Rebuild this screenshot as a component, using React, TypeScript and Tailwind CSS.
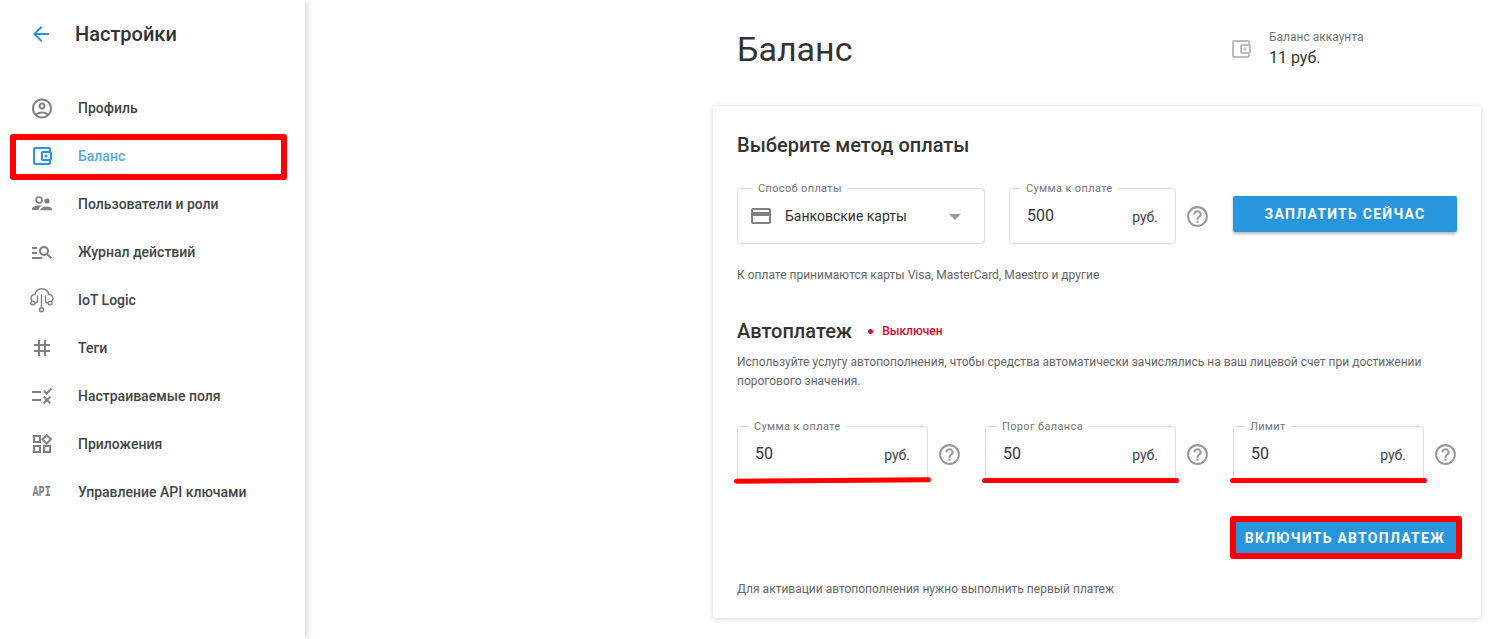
import React from "react";
import {
  MdArrowBack,
  MdOutlineAccountCircle,
  MdOutlineAccountBalanceWallet,
  MdManageSearch,
  MdTag,
  MdRule,
  MdOutlineWidgets,
  MdHelpOutline,
  MdOutlineCreditCard,
} from "react-icons/md";

const UsersIcon = () => (
  <svg width="24" height="24" viewBox="0 0 24 24" fill="#808080">
    <circle cx="9" cy="8" r="3" fill="none" stroke="#808080" strokeWidth="1.7" />
    <circle cx="17" cy="9" r="2.6" />
    <path d="M2 18v-1.2C2 14.8 6 13.4 9 13.4c1 0 2 .15 3 .45-1.6.8-3 1.9-3.6 4.15H2z" />
    <path d="M10 18.2c.6-2.4 4.2-3.8 7-3.8 2.400 0 5 1 5 2.700v1.100H10z" />
  </svg>
);

const CloudIcon = () => (
  <svg width="26" height="26" viewBox="0 0 26 26" fill="none" stroke="#808080" strokeWidth="1.4" strokeLinecap="round" className="shrink-0">
    <path d="M2.800 13.500C1.300 11.500 1.800 7.800 5.800 7.500 7 3.500 10 1.700 13 1.700c3.500 0 6 2.300 7 5.800 3.800.3 4.800 3.800 3.200 6" />
    <path d="M12.500 8v12.500M8.500 9v4.500c0 1.500-1 2.500-2.700 2.500M16.500 9v4.500c0 1.500 1 2.500 2.700 2.500" />
    <circle cx="12.500" cy="22.800" r="2" />
    <circle cx="3.800" cy="16" r="1.900" />
    <circle cx="21.200" cy="16" r="1.900" />
  </svg>
);

const navItems: { label: string; icon: React.ReactNode; active?: boolean }[] = [
  { label: "Профиль", icon: <MdOutlineAccountCircle size={25} color="#808080" /> },
  { label: "Баланс", icon: <MdOutlineAccountBalanceWallet size={24} color="#2a94d6" />, active: true },
  { label: "Пользователи и роли", icon: <UsersIcon /> },
  { label: "Журнал действий", icon: <MdManageSearch size={24} color="#808080" /> },
  { label: "IoT Logic", icon: <CloudIcon /> },
  { label: "Теги", icon: <MdTag size={24} color="#808080" /> },
  { label: "Настраиваемые поля", icon: <MdRule size={24} color="#808080" /> },
  { label: "Приложения", icon: <MdOutlineWidgets size={24} color="#808080" /> },
  {
    label: "Управление API ключами",
    icon: <span className="font-['Liberation_Mono',monospace] text-[14px] font-bold text-[#808080] scale-x-[0.72]">API</span>,
  },
];

function Field({ label, value, wide }: { label: string; value: string; wide?: boolean }) {
  return (
    <div className={`relative h-[56px] rounded-[4px] border border-[#dedede] flex items-center pl-[17px] pr-[17px] ${wide ? "w-[167px]" : "w-[191px]"}`}>
      <span className="absolute left-[11px] -top-[7px] bg-white px-[5px] text-[11px] leading-[13px] tracking-[0.35px] text-[#757575]">{label}</span>
      <span className="flex-1 text-[16px] text-[#333]">{value}</span>
      <span className="text-[14px] text-[#444] pt-[2px]">руб.</span>
    </div>
  );
}

const Help = () => (
  <div className="w-[24px] h-[24px] shrink-0 flex items-center justify-center">
    <MdHelpOutline size={25} color="#999" className="shrink-0" />
  </div>
);

function Underline({ slanted }: { slanted?: boolean }) {
  return (
    <div className={`absolute -left-[3px] -right-[3px] -bottom-[1px] h-[5px] rounded-full bg-[#ff0000] ${slanted ? "-rotate-[0.5deg]" : ""}`} />
  );
}

export default function App() {
  return (
    <div className="flex h-[639px] w-[1499px] overflow-hidden bg-white font-['Roboto',sans-serif]">
      <aside className="w-[305px] shrink-0 h-full bg-white shadow-[2px_0_7px_rgba(0,0,0,0.16)] z-10">
        <div className="h-[84px] pb-[16px] flex items-center pl-[29px]">
          <MdArrowBack size={24} color="#2a94d6" />
          <span className="ml-[22px] text-[20px] font-medium text-[#333]">Настройки</span>
        </div>
        <nav>
          {navItems.map((item) => (
            <div key={item.label} className="relative h-[48px] flex items-center">
              <div className="w-[78px] pl-[30px] shrink-0">
                <div className="w-[24px] h-[24px] flex items-center justify-center">{item.icon}</div>
              </div>
              <span className={`text-[14px] font-medium ${item.active ? "text-[#5ba8da]" : "text-[#444]"}`}>{item.label}</span>
              {item.active && (
                <div className="absolute left-[10px] top-[2px] w-[277px] h-[46px] border-[6px] border-[#ff0000] rounded-[3px]" />
              )}
            </div>
          ))}
        </nav>
      </aside>

      <main className="flex-1 pl-[408px]">
        <div className="w-[768px]">
          <header className="h-[106px] px-[24px] flex justify-between items-start">
            <h1 className="mt-[26px] text-[34px] leading-[46px] text-[#333]">Баланс</h1>
            <div className="w-[226px] mt-[28px] flex">
              <MdOutlineAccountBalanceWallet size={24} color="#bdbdbd" className="-ml-[2px] mt-[9px]" />
              <div className="ml-[16px]">
                <div className="text-[12px] leading-[18px] text-[#757575]">Баланс аккаунта</div>
                <div className="text-[16px] leading-[24px] text-[#333]">11 руб.</div>
              </div>
            </div>
          </header>

          <section className="bg-white rounded-[4px] shadow-[0_1px_6px_rgba(0,0,0,0.16)] px-[24px] pt-[24px] pb-[19px]">
            <h2 className="h-[30px] flex items-center text-[20px] font-medium text-[#333]">Выберите метод оплаты</h2>

            <div className="mt-[28px] flex items-center">
              <div className="relative h-[56px] w-[248px] rounded-[4px] border border-[#dedede] flex items-center pl-[11px]">
                <span className="absolute left-[15px] -top-[7px] bg-white px-[5px] text-[11px] leading-[13px] tracking-[0.35px] text-[#757575]">Способ оплаты</span>
                <MdOutlineCreditCard size={24} color="#808080" />
                <span className="ml-[12px] flex-1 text-[14px] text-[#333]">Банковские карты</span>
                <span className="mr-[23px] mt-[2px] w-0 h-0 border-x-[6px] border-x-transparent border-t-[6px] border-t-[#9a9a9a]" />
              </div>
              <div className="ml-[24px]"><Field label="Сумма к оплате" value="500" wide /></div>
              <div className="ml-[9px] h-[24px]"><Help /></div>
              <button className="ml-[24px] h-[36px] w-[224px] rounded-[2px] bg-[#2896dc] text-white text-[14px] font-bold tracking-[1.25px] shadow-[0_2px_3px_rgba(0,0,0,0.28)] -mt-[4px]">
                ЗАПЛАТИТЬ СЕЙЧАС
              </button>
            </div>

            <p className="mt-[21px] h-[20px] flex items-center text-[12px] text-[#666]">К оплате принимаются карты Visa, MasterCard, Maestro и другие</p>

            <div className="mt-[31px] h-[30px] flex items-center">
              <h2 className="text-[20px] font-medium text-[#333]">Автоплатеж</h2>
              <span className="ml-[16px] w-[5px] h-[5px] rounded-full bg-[#d9042b]" />
              <span className="ml-[9px] text-[12px] font-medium text-[#d9042b]">Выключен</span>
            </div>

            <p className="mt-[7px] text-[12px] leading-[19px] text-[#666]">
              Используйте услугу автопополнения, чтобы средства автоматически зачислялись на ваш лицевой счет при достижении порогового значения.
            </p>

            <div className="mt-[35px] flex gap-[24px] items-center">
              {[
                { label: "Сумма к оплате", slanted: true },
                { label: "Порог баланса" },
                { label: "Лимит" },
              ].map((f) => (
                <div key={f.label} className="flex items-center gap-[9px]">
                  <div className="relative">
                    <Field label={f.label} value="50" />
                    <Underline slanted={f.slanted} />
                  </div>
                  <Help />
                </div>
              ))}
            </div>

            <div className="mt-[38px] flex justify-end">
              <div className="relative">
                <button className="h-[36px] w-[224px] bg-[#2896dc] text-white text-[14px] font-bold tracking-[1.25px]">ВКЛЮЧИТЬ АВТОПЛАТЕЖ</button>
                <div className="absolute -left-[3px] -right-[5px] -top-[4px] -bottom-[3px] border-[6px] border-[#ff0000] rounded-[3px]" />
              </div>
            </div>

            <p className="mt-[23px] h-[20px] flex items-center text-[12px] text-[#666]">Для активации автопополнения нужно выполнить первый платеж</p>
          </section>
        </div>
      </main>
    </div>
  );
}
